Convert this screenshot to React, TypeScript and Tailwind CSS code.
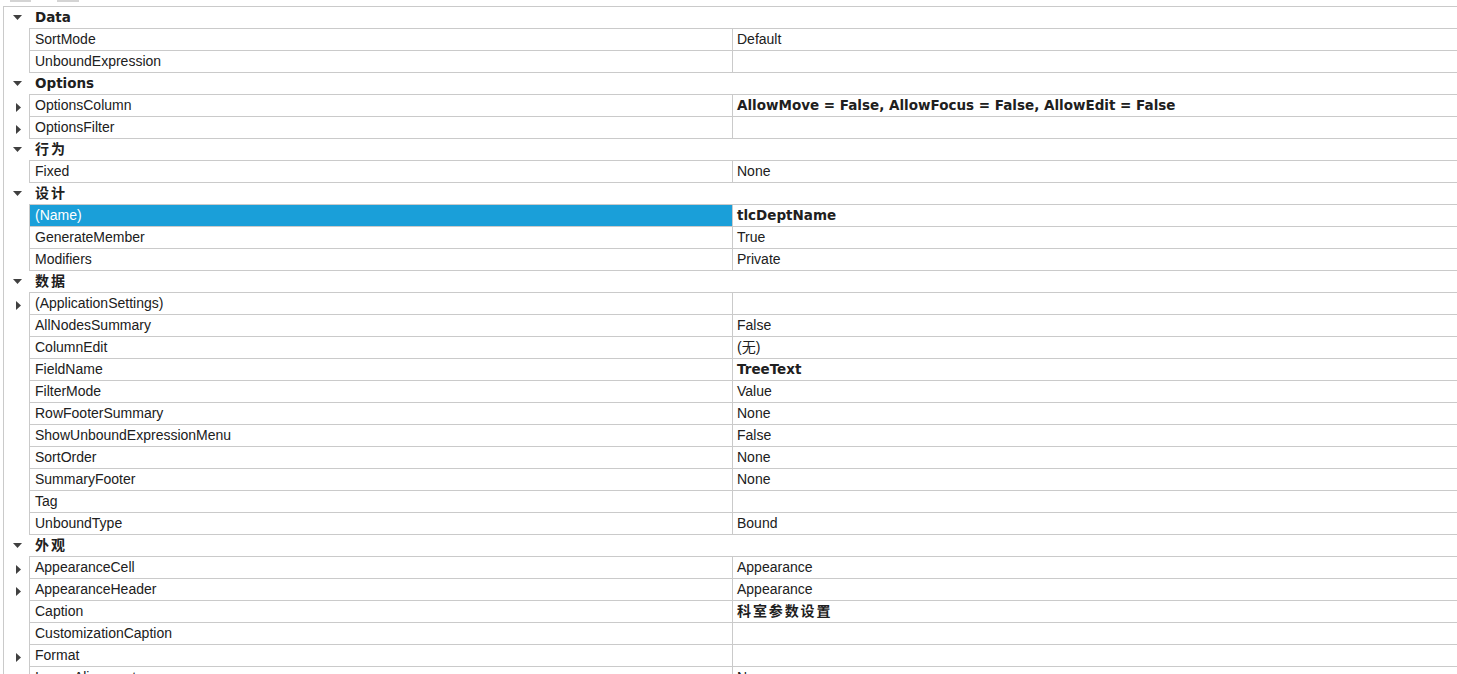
import React from "react";

type Row =
  | { kind: "cat"; label: string }
  | { kind: "prop"; name: string; value?: string; bold?: boolean; expand?: boolean; selected?: boolean };

const rows: Row[] = [
  { kind: "cat", label: "Data" },
  { kind: "prop", name: "SortMode", value: "Default" },
  { kind: "prop", name: "UnboundExpression" },
  { kind: "cat", label: "Options" },
  { kind: "prop", name: "OptionsColumn", value: "AllowMove = False, AllowFocus = False, AllowEdit = False", bold: true, expand: true },
  { kind: "prop", name: "OptionsFilter", expand: true },
  { kind: "cat", label: "行为" },
  { kind: "prop", name: "Fixed", value: "None" },
  { kind: "cat", label: "设计" },
  { kind: "prop", name: "(Name)", value: "tlcDeptName", bold: true, selected: true },
  { kind: "prop", name: "GenerateMember", value: "True" },
  { kind: "prop", name: "Modifiers", value: "Private" },
  { kind: "cat", label: "数据" },
  { kind: "prop", name: "(ApplicationSettings)", expand: true },
  { kind: "prop", name: "AllNodesSummary", value: "False" },
  { kind: "prop", name: "ColumnEdit", value: "(无)" },
  { kind: "prop", name: "FieldName", value: "TreeText", bold: true },
  { kind: "prop", name: "FilterMode", value: "Value" },
  { kind: "prop", name: "RowFooterSummary", value: "None" },
  { kind: "prop", name: "ShowUnboundExpressionMenu", value: "False" },
  { kind: "prop", name: "SortOrder", value: "None" },
  { kind: "prop", name: "SummaryFooter", value: "None" },
  { kind: "prop", name: "Tag" },
  { kind: "prop", name: "UnboundType", value: "Bound" },
  { kind: "cat", label: "外观" },
  { kind: "prop", name: "AppearanceCell", value: "Appearance", expand: true },
  { kind: "prop", name: "AppearanceHeader", value: "Appearance", expand: true },
  { kind: "prop", name: "Caption", value: "科室参数设置", bold: true },
  { kind: "prop", name: "CustomizationCaption" },
  { kind: "prop", name: "Format", expand: true },
  { kind: "prop", name: "ImageAlignment", value: "None" },
];

const isCJK = (s: string) => /[\u4e00-\u9fff]/.test(s);

function Down() {
  return (
    <svg width="9" height="5" viewBox="0 0 9 5" className="block">
      <path d="M0 0 H9 L4.5 5 Z" fill="#404040" />
    </svg>
  );
}

function Right() {
  return (
    <svg width="5" height="9" viewBox="0 0 5 9" className="block">
      <path d="M0 0 V9 L5 4.5 Z" fill="#404040" />
    </svg>
  );
}

function BoldText({ text }: { text: string }) {
  if (isCJK(text)) {
    return (
      <span className="block pb-[3px] font-bold text-[14px] tracking-[1.9px] font-['Noto_Sans_CJK_SC',sans-serif]">
        {text}
      </span>
    );
  }
  return <span className="block font-bold text-[13.5px] font-['DejaVu_Sans',sans-serif]">{text}</span>;
}

export default function App() {
  return (
    <div className="w-[1457px] h-[674px] overflow-hidden bg-white text-[14px] leading-none text-[#202020] font-['Liberation_Sans','Noto_Sans_CJK_SC',sans-serif]">
      <div className="flex h-[6px]">
        <div className="ml-[10px] w-[21px] h-[2px] bg-[#d4d4d4]" />
        <div className="ml-[26px] w-[22px] h-[2px] bg-[#d4d4d4]" />
      </div>
      <div className="ml-[3px] border-l border-t border-[#cacaca]">
        {rows.map((r, i) =>
          r.kind === "cat" ? (
            <div key={i} className="flex h-[22px]">
              <div className="w-[25px] shrink-0 flex items-center pl-[9px] pb-[2px]">
                <Down />
              </div>
              <div className="flex-1 border-b border-[#cacaca] flex items-center pl-[6px]">
                <BoldText text={r.label} />
              </div>
            </div>
          ) : (
            <div key={i} className="flex h-[22px]">
              <div className="w-[25px] shrink-0 flex items-center pl-[12px] pt-[2px]">
                {r.expand ? <Right /> : null}
              </div>
              <div
                className={
                  "w-[703px] shrink-0 border-l border-b border-[#cacaca] flex items-center pl-[5px] " +
                  (r.selected ? "bg-[#1a9fd9] text-white" : "")
                }
              >
                <span className="block pb-[2px]">{r.name}</span>
              </div>
              <div className="flex-1 border-l border-b border-[#cacaca] flex items-center pl-[4px] whitespace-nowrap">
                {r.value ? (
                  r.bold ? (
                    <BoldText text={r.value} />
                  ) : (
                    <span className="block pb-[2px]">{r.value}</span>
                  )
                ) : null}
              </div>
            </div>
          )
        )}
      </div>
    </div>
  );
}
